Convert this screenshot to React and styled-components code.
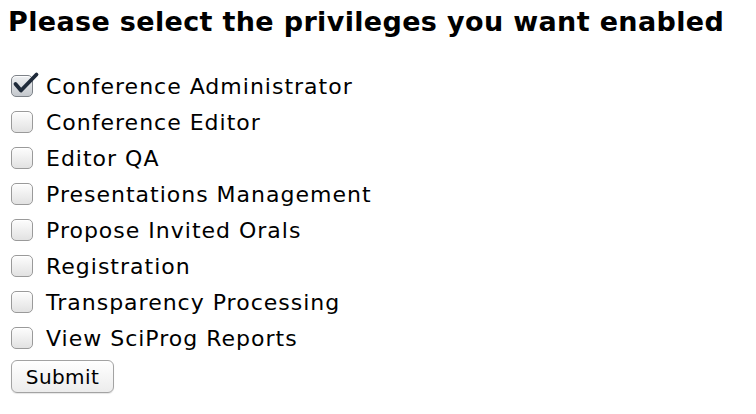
import styled, { createGlobalStyle } from 'styled-components'
import { useState } from 'react'

const privileges = [
  'Conference Administrator',
  'Conference Editor',
  'Editor QA',
  'Presentations Management',
  'Propose Invited Orals',
  'Registration',
  'Transparency Processing',
  'View SciProg Reports',
]

const GlobalStyle = createGlobalStyle`
  body {
    margin: 0;
    background: #fff;
    font-family: "DejaVu Sans", Verdana, sans-serif;
    color: #000;
  }
`

const Page = styled.form`
  padding: 6px 10px;
`

const Heading = styled.h1`
  margin: 0 0 0 -2px;
  font-size: 27px;
  font-weight: bold;
  line-height: 32px;
  letter-spacing: 0.35px;
`

const List = styled.div`
  display: flex;
  flex-direction: column;
  margin-top: 30px;
`

const Row = styled.label`
  display: flex;
  align-items: center;
  gap: 13px;
  height: 36px;
  font-size: 22px;
  letter-spacing: 1px;
  cursor: pointer;
`

const Check = styled.input`
  appearance: none;
  margin: 0 0 0 1px;
  width: 22px;
  height: 22px;
  border: 1px solid #9a9a9a;
  border-radius: 5px;
  background: linear-gradient(#fdfdfd, #e2e2e2);
  box-shadow: inset 0 1px 1px rgba(255, 255, 255, 0.9);
  position: relative;
  flex: none;

  &:checked {
    border-color: #7d8288;
    background: linear-gradient(#eef0f2, #c4c8cd);
  }

  &:checked::after {
    content: '';
    position: absolute;
    left: 0;
    top: -5px;
    width: 28px;
    height: 24px;
    background: no-repeat url("data:image/svg+xml,%3Csvg xmlns='http://www.w3.org/2000/svg' width='28' height='24' viewBox='0 0 28 24'%3E%3Cpath d='M3.5 13 L9 19.5 L24.5 3.5' fill='none' stroke='%231f2b3a' stroke-width='3.8' stroke-linecap='round' stroke-linejoin='round'/%3E%3C/svg%3E");
  }
`

const Submit = styled.button`
  margin: 4px 0 0 1px;
  width: 103px;
  height: 33px;
  font-family: inherit;
  font-size: 20px;
  letter-spacing: 0.4px;
  color: #000;
  border: 1px solid #a3a3a3;
  border-radius: 6px;
  background: linear-gradient(#ffffff, #ececec);
  box-shadow: 0 1px 1px rgba(0, 0, 0, 0.1);
  padding: 0;
`

export default function App() {
  const [checked, setChecked] = useState({ 'Conference Administrator': true })

  return (
    <>
      <GlobalStyle />
      <Page onSubmit={e => e.preventDefault()}>
        <Heading>Please select the privileges you want enabled</Heading>
        <List>
          {privileges.map(name => (
            <Row key={name}>
              <Check
                type="checkbox"
                checked={!!checked[name]}
                onChange={e => setChecked({ ...checked, [name]: e.target.checked })}
              />
              {name}
            </Row>
          ))}
        </List>
        <Submit type="submit">Submit</Submit>
      </Page>
    </>
  )
}
